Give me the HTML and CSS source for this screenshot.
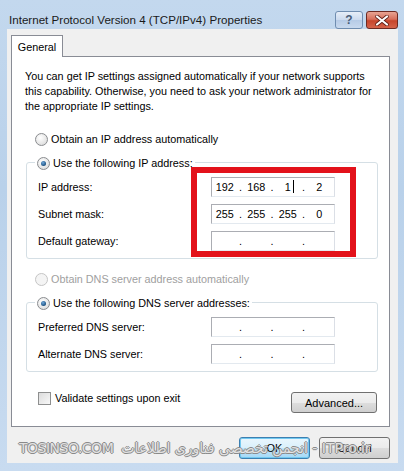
FILE: index.html
```html
<!DOCTYPE html>
<html lang="en">
<head>
    <meta charset="UTF-8">
    <meta name="viewport" content="width=device-width, initial-scale=1.0">
    <title>Internet Protocol Version 4 (TCP/IPv4) Properties</title>
    <link rel="stylesheet" href="styles.css">
</head>
<body>
    <div class="window">
        <div class="titlebar">
            <span class="title">Internet Protocol Version 4 (TCP/IPv4) Properties</span>
            <span class="cap-btn help">?</span>
            <span class="cap-btn close">
                <svg width="14" height="11" viewBox="0 0 14 11">
                    <path d="M2 1.5 L12 9.5 M12 1.5 L2 9.5" stroke="#5a1a12" stroke-width="3.6" stroke-linecap="round"/>
                    <path d="M2 1.5 L12 9.5 M12 1.5 L2 9.5" stroke="#fff" stroke-width="2.2" stroke-linecap="round"/>
                </svg>
            </span>
        </div>

        <div class="client">
            <div class="tab">General</div>
            <div class="panel">
                <p class="intro">You can get IP settings assigned automatically if your network supports this capability. Otherwise, you need to ask your network administrator for the appropriate IP settings.</p>

                <div class="option first">
                    <span class="radio"></span>
                    <span>Obtain an IP address automatically</span>
                </div>

                <div class="group ip-group">
                    <div class="group-title">
                        <span class="radio checked"></span>
                        <span>Use the following IP address:</span>
                    </div>
                    <div class="field-row">
                        <span class="field-label">IP address:</span>
                        <div class="ip-box">
                            <span class="oct">192</span><span class="dot">.</span>
                            <span class="oct">168</span><span class="dot">.</span>
                            <span class="oct">1<span class="caret"></span></span><span class="dot">.</span>
                            <span class="oct">2</span>
                        </div>
                    </div>
                    <div class="field-row">
                        <span class="field-label">Subnet mask:</span>
                        <div class="ip-box">
                            <span class="oct">255</span><span class="dot">.</span>
                            <span class="oct">255</span><span class="dot">.</span>
                            <span class="oct">255</span><span class="dot">.</span>
                            <span class="oct">0</span>
                        </div>
                    </div>
                    <div class="field-row">
                        <span class="field-label">Default gateway:</span>
                        <div class="ip-box">
                            <span class="oct"></span><span class="dot">.</span>
                            <span class="oct"></span><span class="dot">.</span>
                            <span class="oct"></span><span class="dot">.</span>
                            <span class="oct"></span>
                        </div>
                    </div>
                    <div class="highlight"></div>
                </div>

                <div class="option disabled">
                    <span class="radio"></span>
                    <span>Obtain DNS server address automatically</span>
                </div>

                <div class="group dns-group">
                    <div class="group-title">
                        <span class="radio checked"></span>
                        <span>Use the following DNS server addresses:</span>
                    </div>
                    <div class="field-row">
                        <span class="field-label">Preferred DNS server:</span>
                        <div class="ip-box">
                            <span class="oct"></span><span class="dot">.</span>
                            <span class="oct"></span><span class="dot">.</span>
                            <span class="oct"></span><span class="dot">.</span>
                            <span class="oct"></span>
                        </div>
                    </div>
                    <div class="field-row">
                        <span class="field-label">Alternate DNS server:</span>
                        <div class="ip-box">
                            <span class="oct"></span><span class="dot">.</span>
                            <span class="oct"></span><span class="dot">.</span>
                            <span class="oct"></span><span class="dot">.</span>
                            <span class="oct"></span>
                        </div>
                    </div>
                </div>

                <div class="validate-row">
                    <span class="check"></span>
                    <span class="validate-label">Validate settings upon exit</span>
                    <button class="btn advanced">Advanced...</button>
                </div>
            </div>

            <div class="footer">
                <button class="btn default">OK</button>
                <button class="btn">Cancel</button>
                <div class="watermark">
                    <span class="wm-site">Tosinso.com</span>
                    <span class="wm-fa" dir="rtl">ITPro.ir - انجمن تخصصی فناوری اطلاعات</span>
                </div>
            </div>
        </div>
    </div>
</body>
</html>
```

FILE: styles.css
```css
body {
    margin: 0;
    font-family: "Liberation Sans", Arial, sans-serif;
    font-size: 10.8px;
    color: #000;
}

.window {
    width: 404px;
    height: 471px;
    box-sizing: border-box;
    padding: 0 6px 9px 7px;
    display: flex;
    flex-direction: column;
    background: linear-gradient(180deg, #c3d8ee 0%, #b9d1ea 40%, #c8dbf0 100%);
}

.titlebar {
    height: 31px;
    display: flex;
    align-items: flex-start;
}

.title {
    margin: 13px 0 0 2px;
    font-size: 11.6px;
    color: #1a1a1a;
}

.cap-btn {
    height: 16px;
    margin-top: 11px;
    border: 1px solid #6f8db0;
    border-radius: 3px;
    display: flex;
    align-items: center;
    justify-content: center;
}

.help {
    width: 26px;
    margin-left: auto;
    margin-right: 3px;
    background: linear-gradient(180deg, #e6eef8 0%, #cbdaee 50%, #b6cbe6 51%, #c8d9ee 100%);
    color: #4a5d78;
    font-weight: bold;
    font-size: 12px;
}

.close {
    width: 30px;
    border-color: #6d2a22;
    background: linear-gradient(180deg, #e8a493 0%, #d7705c 45%, #c7452b 55%, #d5634a 100%);
}

.client {
    flex: 1;
    background: #f0f0f0;
    padding: 6px 8px 4px 4px;
    display: flex;
    flex-direction: column;
}

.tab {
    width: 50px;
    height: 21px;
    margin-bottom: -1px;
    border: 1px solid #898c95;
    border-bottom: none;
    background: #fff;
    position: relative;
    z-index: 1;
    display: flex;
    align-items: center;
    justify-content: center;
}

.panel {
    border: 1px solid #898c95;
    background: #fff;
    padding: 0 11px 13px 14px;
}

.intro {
    margin: 12px 0 0 -1px;
    line-height: 15px;
}

.option,
.group-title {
    height: 16px;
    display: flex;
    align-items: center;
    gap: 3px;
}

.option {
    margin-left: 9px;
}

.option.first {
    margin-top: 17px;
}

.option.disabled {
    margin-top: 12px;
    color: #a0a0a0;
}

.radio {
    width: 11px;
    height: 11px;
    border: 1px solid #8a8c8f;
    border-radius: 50%;
    background: radial-gradient(circle at 40% 35%, #ffffff 0%, #e6e6e6 60%, #d4d4d4 100%);
    display: flex;
    align-items: center;
    justify-content: center;
}

.radio.checked::after {
    content: "";
    width: 5px;
    height: 5px;
    border-radius: 50%;
    background: radial-gradient(circle at 40% 35%, #6fa8dc 0%, #1c5180 70%);
}

.disabled .radio {
    border-color: #c5c5c5;
    background: #f4f4f4;
}

.group {
    border: 1px solid #d5dfe5;
    border-radius: 3px;
    margin-top: 15px;
    padding: 0 11px 7px 11px;
    position: relative;
}

.group-title {
    margin: -8px 0 0 -3px;
    padding: 0 2px;
    background: #fff;
    width: max-content;
}

.field-row {
    display: flex;
    align-items: center;
    height: 20px;
    margin-top: 6px;
}

.field-row + .field-row {
    margin-top: 7px;
}

.field-label {
    width: 173px;
}

.ip-box {
    width: 120px;
    height: 18px;
    border: 1px solid #abadb3;
    border-bottom-color: #e3e9ef;
    border-right-color: #dbdfe6;
    display: flex;
    align-items: center;
    padding: 0 2px 0 0;
}

.oct {
    flex: 1;
    text-align: center;
    position: relative;
}

.dot {
    width: 6px;
    text-align: center;
}

.caret {
    position: absolute;
    top: -1px;
    margin-left: 2px;
    height: 13px;
    border-left: 1px solid #000;
}

.highlight {
    position: absolute;
    left: 164px;
    top: 4px;
    width: 153px;
    height: 78px;
    border: 6px solid #e3121b;
}

.dns-group {
    margin-top: 15px;
}

.validate-row {
    display: flex;
    align-items: center;
    margin: 20px 1px 0 12px;
    height: 21px;
}

.check {
    width: 11px;
    height: 11px;
    border: 1px solid #8e8f8f;
    background: linear-gradient(135deg, #dcdcdc 0%, #f8f8f8 100%);
    margin-top: -9px;
}

.validate-label {
    margin: -9px 0 0 4px;
}

.btn {
    font-family: "Liberation Sans", Arial, sans-serif;
    font-size: 11px;
    color: #000;
    height: 22px;
    border: 1px solid #707070;
    border-radius: 3px;
    background: linear-gradient(180deg, #f2f2f2 0%, #ebebeb 50%, #dddddd 51%, #cfcfcf 100%);
    padding: 0;
}

.advanced {
    margin-left: auto;
    width: 86px;
    height: 21px;
}

.footer {
    margin-top: 10px;
    display: flex;
    justify-content: flex-end;
    gap: 9px;
    position: relative;
}

.footer .btn {
    width: 71px;
}

.btn.default {
    border-color: #3c7fb1;
    background: linear-gradient(180deg, #eaf6fd 0%, #d9f0fc 50%, #bee6fd 51%, #a7d9f5 100%);
    box-shadow: inset 0 0 0 1px #72c9f0;
}

.watermark {
    position: absolute;
    left: 8px;
    right: 0;
    top: 0;
    height: 22px;
    display: flex;
    align-items: center;
    gap: 8px;
    pointer-events: none;
    color: rgba(255, 255, 255, 0.75);
    text-shadow: 1px 0 0 #8a8a8a, -1px 0 0 #8a8a8a, 0 1px 0 #8a8a8a, 0 -1px 0 #8a8a8a;
}

.wm-site {
    font-family: "DejaVu Sans", sans-serif;
    font-size: 14px;
    text-transform: uppercase;
    letter-spacing: -0.5px;
}

.wm-fa {
    font-family: "DejaVu Sans", "Noto Sans", sans-serif;
    font-size: 14px;
    white-space: nowrap;
}
```
